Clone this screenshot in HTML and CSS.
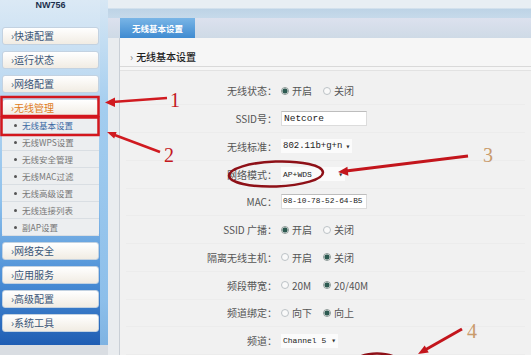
FILE: index.html
```html
<!DOCTYPE html>
<html>
  <head>
    <title>无线基本设置</title>
    <link rel="stylesheet" href="styles.css">
  </head>
  <body>
    <div class="page">
      <aside class="sidebar">
        <div class="brand">NW756</div>
        <a class="menu-item">›快速配置</a>
        <a class="menu-item">›运行状态</a>
        <a class="menu-item">›网络配置</a>
        <a class="menu-item active">›无线管理</a>
        <ul class="submenu">
          <li class="current">无线基本设置</li>
          <li>无线WPS设置</li>
          <li>无线安全管理</li>
          <li>无线MAC过滤</li>
          <li>无线高级设置</li>
          <li>无线连接列表</li>
          <li>副AP设置</li>
        </ul>
        <a class="menu-item">›网络安全</a>
        <a class="menu-item">›应用服务</a>
        <a class="menu-item">›高级配置</a>
        <a class="menu-item">›系统工具</a>
      </aside>
      <div class="gutter"></div>
      <main class="main">
        <div class="topband"></div>
        <div class="tabbar"><span class="tab">无线基本设置</span></div>
        <div class="content">
          <div class="rail"></div>
          <section class="panel">
            <h2 class="heading"><span class="caret">›</span>无线基本设置</h2>
            <div class="form">
              <div class="row">
                <label>无线状态：</label>
                <span class="radio"><i class="dot on"></i>开启</span>
                <span class="radio"><i class="dot"></i>关闭</span>
              </div>
              <div class="row">
                <label>SSID号：</label>
                <span class="input">Netcore</span>
              </div>
              <div class="row">
                <label>无线标准：</label>
                <span class="select std">802.11b+g+n<b>▾</b></span>
              </div>
              <div class="row">
                <label>网络模式：</label>
                <span class="select mode">AP+WDS<b>▾</b></span>
              </div>
              <div class="row">
                <label>MAC：</label>
                <span class="input mac">08-10-78-52-64-B5</span>
              </div>
              <div class="row">
                <label>SSID 广播：</label>
                <span class="radio"><i class="dot on"></i>开启</span>
                <span class="radio"><i class="dot"></i>关闭</span>
              </div>
              <div class="row">
                <label>隔离无线主机：</label>
                <span class="radio"><i class="dot"></i>开启</span>
                <span class="radio"><i class="dot on"></i>关闭</span>
              </div>
              <div class="row">
                <label>频段带宽：</label>
                <span class="radio"><i class="dot"></i>20M</span>
                <span class="radio"><i class="dot on"></i>20/40M</span>
              </div>
              <div class="row">
                <label>频道绑定：</label>
                <span class="radio"><i class="dot"></i>向下</span>
                <span class="radio"><i class="dot on"></i>向上</span>
              </div>
              <div class="row">
                <label>频道：</label>
                <span class="select chan">Channel 5<b>▾</b></span>
              </div>
            </div>
          </section>
        </div>
      </main>

      <!-- hand-drawn annotations over the screenshot -->
      <svg class="marks" width="531" height="355" viewBox="0 0 531 355">
        <rect x="1.5" y="97" width="97" height="19" fill="none" stroke="#d3161d" stroke-width="2.5"/>
        <rect x="1.5" y="117.5" width="97" height="17.5" fill="none" stroke="#d3161d" stroke-width="2.5"/>

        <line x1="167" y1="98" x2="112" y2="102" stroke="#d01a20" stroke-width="2.5"/>
        <polygon points="105,102.5 115,97.5 115,107" fill="#d01a20"/>
        <text x="170" y="107" class="num red">1</text>

        <line x1="160" y1="152" x2="112" y2="134" stroke="#d01a20" stroke-width="2.5"/>
        <polygon points="107,132 116.6,131.9 114.2,138.5" fill="#d01a20"/>
        <text x="164" y="162" class="num red">2</text>

        <ellipse cx="276" cy="174" rx="47" ry="12.5" fill="none" stroke="#8e1017" stroke-width="2.5" transform="rotate(-2 276 174)"/>
        <line x1="468" y1="156" x2="346" y2="171" stroke="#c3151c" stroke-width="3"/>
        <polygon points="338,172 348.4,175.8 347.4,166.8" fill="#c3151c"/>
        <text x="483" y="162" class="num tan">3</text>

        <line x1="462" y1="329" x2="425" y2="350" stroke="#c3151c" stroke-width="3"/>
        <polygon points="418,354 428.7,352.6 424.7,345.6" fill="#c3151c"/>
        <text x="467" y="338" class="num tan">4</text>
        <ellipse cx="377" cy="369" rx="28" ry="15.5" fill="none" stroke="#8e1017" stroke-width="2.5"/>
      </svg>
    </div>
  </body>
</html>
```

FILE: styles.css
```css
* {
  box-sizing: border-box;
}
html,
body {
  margin: 0;
}
body {
  width: 531px;
  height: 355px;
  overflow: hidden;
  background: #f0f0f0;
  font-family: "Noto Sans CJK SC", "Noto Sans", sans-serif;
}
.page {
  position: relative;
  display: flex;
  height: 355px;
}

/* left menu */
.sidebar {
  width: 100px;
  flex: none;
  display: flex;
  flex-direction: column;
  padding: 0 1px 0 2px;
  background: linear-gradient(#dbe9f5 0, #bad8f1 90px, #8fc1ec 200px, #4a8ed6 280px, #1f5db3 345px, #d9dde2 345px);
}
.brand {
  height: 27px;
  padding-top: 1px;
  text-align: center;
  font: bold 9px "Liberation Sans", sans-serif;
  line-height: 9px;
  color: #1b2f4d;
}
.menu-item {
  display: block;
  height: 18px;
  margin-bottom: 6px;
  padding-left: 8px;
  line-height: 16px;
  font-size: 10px;
  color: #3a5577;
  background: linear-gradient(#ffffff, #f1ece3);
  border: 1px solid #c3d2e1;
  border-radius: 3px;
}
.menu-item.active {
  margin-bottom: 0;
  color: #e07b22;
}
.submenu {
  list-style: none;
  margin: 0 0 6px;
  padding: 0;
  background: #eceef0;
  border-radius: 2px;
}
.submenu li {
  position: relative;
  height: 17px;
  padding-left: 20px;
  line-height: 16px;
  font-size: 8.5px;
  color: #777;
  border-bottom: 1px solid #d9dee3;
}
.submenu li::before {
  content: "";
  position: absolute;
  left: 12px;
  top: 7px;
  width: 3px;
  height: 3px;
  border-radius: 50%;
  background: #555;
}
.submenu li.current {
  color: #3a69a4;
}
.gutter {
  width: 8px;
  flex: none;
  background: linear-gradient(#d7e7f4, #a3cdef 110px, #8dbfea 300px, #7fb3e2 345px, #d9dde2 345px);
}

/* right side */
.main {
  flex: 1;
  display: flex;
  flex-direction: column;
}
.topband {
  height: 18px;
  background: linear-gradient(#e8eef3 0, #e8eef3 8px, #bdd3e6 9px, #c5d9ea 17px);
}
.tabbar {
  height: 20px;
  padding-left: 12px;
  background: linear-gradient(#dce1ee, #cedae6);
}
.tab {
  display: block;
  width: 75px;
  height: 20px;
  line-height: 20px;
  text-align: center;
  font-size: 8.5px;
  font-weight: bold;
  color: #fff;
  background: linear-gradient(#79b5e6, #3f8bd1);
}
.content {
  flex: 1;
  display: flex;
}
.rail {
  width: 12px;
  background: #e9ecef;
  border-right: 1px solid #c9cfd6;
}
.panel {
  flex: 1;
  background: #f6f6f6;
}
.heading {
  margin: 0;
  height: 29px;
  padding: 13px 0 0 10px;
  font-size: 10px;
  font-weight: 500;
  line-height: 12px;
  color: #1e1e1e;
  border-bottom: 1px solid #d9d9d9;
}
.caret {
  margin-right: 3px;
  color: #888;
}
.form {
  margin-top: 3px;
  padding-top: 7px;
  background: #f1f1f1;
  border-top: 1px solid #e2e2e2;
}
.row {
  display: flex;
  align-items: center;
  height: 27.75px;
  margin: 0 6px;
  font-size: 10px;
  color: #555;
  border-bottom: 1px solid #ececec;
}
.row label {
  width: 151px;
  margin-right: 4px;
  text-align: right;
  color: #555;
}
.radio {
  display: inline-flex;
  align-items: center;
  min-width: 42px;
  gap: 3px;
}
.dot {
  width: 8px;
  height: 8px;
  border-radius: 50%;
  border: 1px solid #bcc2c6;
  background: #f9f9f9;
}
.dot.on {
  border-color: #8e9a98;
  background: radial-gradient(circle, #2d5a51 0 2.2px, #dde5e3 2.8px);
}
.input {
  width: 86px;
  height: 15px;
  padding: 0 2px;
  white-space: nowrap;
  overflow: hidden;
  font: 9.5px/13px "Liberation Mono", monospace;
  color: #222;
  background: #fff;
  border: 1px solid #dcdcdc;
  border-top-color: #bdbdbd;
}
.input.mac {
  font-size: 7.8px;
  padding-left: 1px;
}
.select {
  display: inline-flex;
  align-items: center;
  height: 14px;
  padding: 0 2px;
  gap: 3px;
  white-space: nowrap;
  font: 9px "Liberation Mono", monospace;
  color: #222;
  background: #fbfbfb;
}
.select b {
  font-size: 8px;
  font-weight: normal;
  color: #333;
}
.select.mode {
  width: 64px;
  justify-content: space-between;
  font-size: 8px;
}
.select.chan {
  font-size: 8px;
  gap: 5px;
}

.marks {
  position: absolute;
  left: 0;
  top: 0;
  pointer-events: none;
}
.num {
  font-family: "Liberation Serif", serif;
  font-size: 20px;
}
.num.red {
  fill: #c4181e;
}
.num.tan {
  fill: #c99b6c;
}
```
